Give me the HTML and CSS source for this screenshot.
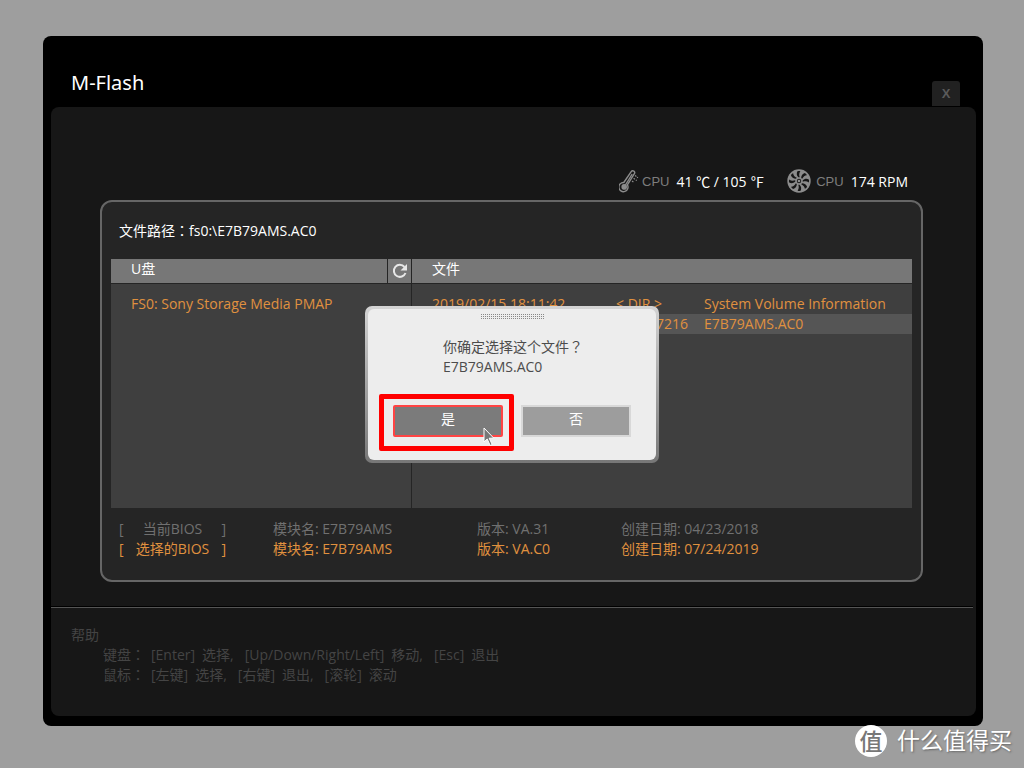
FILE: index.html
```html
<!DOCTYPE html>
<html lang="zh-CN">
<head>
<meta charset="utf-8">
<title>M-Flash</title>
<link rel="stylesheet" href="styles.css">
</head>
<body>
<main class="window">
  <header class="titlebar">
    <h1 class="title">M-Flash</h1>
    <button class="close" type="button" aria-label="关闭">X</button>
  </header>

  <div class="content">
    <section class="workspace">
      <div class="sensors">
        <div class="sensor">
          <svg class="sensor-icon thermometer" viewBox="0 0 20 24" aria-hidden="true">
            <g fill="none" stroke="#8c8c8c" stroke-width="1.4">
              <path d="M4.800 13.500 12.200 2.600a1.900 1.900 0 0 1 3.200 2.100L8.400 15.800a4.600 4.600 0 1 1-3.600-2.300z"/>
              <path d="M6.400 16 13.200 5.200"/>
              <path d="M16 6.500l1.400.9M14.600 9.300l1.400.9M13 12l1.400.9M18 8.200l1 .6M16.800 11l1 .6" stroke-width="1.200"/>
            </g>
            <circle cx="5.200" cy="17.900" r="2.800" fill="#8c8c8c"/>
          </svg>
          <span class="sensor-name">CPU</span>
          <span class="sensor-value">41 <span class="mark" lang="zh-TW">℃</span> / 105 <span class="mark" lang="zh-TW">℉</span></span>
        </div>
        <div class="sensor">
          <svg class="sensor-icon" viewBox="0 0 24 24" aria-hidden="true">
            <circle cx="12" cy="12" r="11.700" fill="#8c8c8c"/>
            <g fill="#171717">
              <path id="slot" d="M11.400 8.300C9.600 6.500 9.400 4.300 10.400 2.200c1-.4 2.200-.3 3 .1-1.300 1.700-1.500 3.500-.7 5.900z"/>
              <use href="#slot" transform="rotate(45 12 12)"/>
              <use href="#slot" transform="rotate(90 12 12)"/>
              <use href="#slot" transform="rotate(135 12 12)"/>
              <use href="#slot" transform="rotate(180 12 12)"/>
              <use href="#slot" transform="rotate(225 12 12)"/>
              <use href="#slot" transform="rotate(270 12 12)"/>
              <use href="#slot" transform="rotate(315 12 12)"/>
              <circle cx="12" cy="12" r="2.200"/>
            </g>
            <circle cx="12" cy="12" r="1.300" fill="#8c8c8c"/>
          </svg>
          <span class="sensor-name">CPU</span>
          <span class="sensor-value">174 RPM</span>
        </div>
      </div>

      <div class="card">
        <p class="path">文件路径<span class="mark" lang="zh-TW">：</span>fs0:\E7B79AMS.AC0</p>

        <div class="browser">
          <div class="pane drives">
            <div class="pane-head">
              <h2 class="pane-title">U盘</h2>
              <button class="refresh" type="button" aria-label="刷新">
                <svg viewBox="0 0 16 16" aria-hidden="true">
                  <path d="M12.500 4A6 6 0 1 0 13.500 10" fill="none" stroke="#e8e8e8" stroke-width="2"/>
                  <path d="M15 1v6.500H8.500z" fill="#e8e8e8"/>
                </svg>
              </button>
            </div>
            <ul class="drive-list">
              <li>FS0: Sony Storage Media PMAP</li>
            </ul>
          </div>
          <div class="pane files">
            <div class="pane-head">
              <h2 class="pane-title">文件</h2>
            </div>
            <table class="file-list" aria-label="文件">
              <tr>
                <td class="date">2019/02/15 18:11:42</td>
                <td class="size dir">&lt; DIR &gt;</td>
                <td>System Volume Information</td>
              </tr>
              <tr class="selected">
                <td class="date"></td>
                <td class="size">7216</td>
                <td>E7B79AMS.AC0</td>
              </tr>
            </table>
          </div>
        </div>

        <table class="versions" aria-label="BIOS">
          <tr>
            <td class="which"><div class="bracket"><span>[</span><span>当前BIOS</span><span>]</span></div></td>
            <td class="module">模块名: E7B79AMS</td>
            <td class="version">版本: VA.31</td>
            <td>创建日期: 04/23/2018</td>
          </tr>
          <tr class="chosen">
            <td class="which"><div class="bracket"><span>[</span><span>选择的BIOS</span><span>]</span></div></td>
            <td class="module">模块名: E7B79AMS</td>
            <td class="version">版本: VA.C0</td>
            <td>创建日期: 07/24/2019</td>
          </tr>
        </table>
      </div>
    </section>

    <footer class="help">
      <h2 class="help-title">帮助</h2>
      <div class="help-row">
        <span class="device">键盘<span class="mark" lang="zh-TW">：</span></span>
        <span class="hint"><span>[Enter]</span><span>选择,</span></span>
        <span class="hint"><span>[Up/Down/Right/Left]</span><span>移动,</span></span>
        <span class="hint"><span>[Esc]</span><span>退出</span></span>
      </div>
      <div class="help-row">
        <span class="device">鼠标<span class="mark" lang="zh-TW">：</span></span>
        <span class="hint"><span>[左键]</span><span>选择,</span></span>
        <span class="hint"><span>[右键]</span><span>退出,</span></span>
        <span class="hint"><span>[滚轮]</span><span>滚动</span></span>
      </div>
    </footer>
  </div>
</main>

<div class="overlay">
  <div class="dialog-frame" role="dialog" aria-modal="true" aria-labelledby="question">
    <div class="dialog">
      <div class="grip"></div>
      <p class="message"><span id="question">你确定选择这个文件<span class="mark" lang="zh-TW">？</span></span><br>E7B79AMS.AC0</p>
      <div class="actions">
        <div class="highlight">
          <button class="choice yes" type="button">是</button>
          <svg class="pointer" viewBox="0 0 12 20" aria-hidden="true">
            <path d="M1 1v14l3.200-3 3 6.500 2-1-3-6.300h4.600z" fill="#777" stroke="#fff" stroke-width="1"/>
          </svg>
        </div>
        <button class="choice" type="button">否</button>
      </div>
    </div>
  </div>
</div>

<div class="brand">
  <span class="brand-seal">值</span>
  <span class="brand-name">什么值得买</span>
</div>
</body>
</html>
```
FILE: styles.css
```css
* {
  box-sizing: border-box;
}

body {
  position: relative;
  display: flex;
  min-height: 100vh;
  margin: 0;
  padding: 36px 41px 42px 43px;
  background: #9e9e9e;
  color: #fff;
  font: 14px/20px "Open Sans", "Noto Sans CJK SC", sans-serif;
}

h1, h2, p, ul {
  margin: 0;
  padding: 0;
  font-size: inherit;
  font-weight: 400;
  list-style: none;
}

button {
  padding: 0;
  border: 0;
  color: inherit;
  font: inherit;
}

table {
  border-collapse: collapse;
}

td {
  padding: 0;
  white-space: nowrap;
}

.mark {
  font-family: "Noto Sans CJK TC", sans-serif;
  line-height: 1;
}

.window {
  display: flex;
  flex: 1;
  flex-direction: column;
  padding: 0 7px 10px 8px;
  border-radius: 8px;
  background: #000;
}

.titlebar {
  display: flex;
  align-items: flex-end;
  justify-content: space-between;
  height: 71px;
  padding: 0 16px 1px 20px;
}

.title {
  padding-bottom: 9px;
  font-family: "Noto Sans", sans-serif;
  font-size: 20px;
  line-height: 28px;
}

.close {
  width: 28px;
  height: 25px;
  border-radius: 3px 3px 0 0;
  background: #212121;
  color: #5a5a5a;
  font: bold 13px "Liberation Sans", sans-serif;
}

.content {
  display: flex;
  flex: 1;
  flex-direction: column;
  border-radius: 8px;
  background: #171717;
}

.workspace {
  display: flex;
  flex: 1;
  flex-direction: column;
  padding: 62px 53px 25px 49px;
}

.sensors {
  display: flex;
  justify-content: flex-end;
  gap: 23px;
  padding: 0 15px 5px 0;
}

.sensor {
  display: flex;
  align-items: center;
}

.sensor-icon {
  width: 24px;
  height: 24px;
  margin: 0 5px 2px 0;
}

.thermometer {
  width: 20px;
  margin-right: 3px;
}

.sensor-name {
  margin-right: 7px;
  color: #7d7d7d;
  font: 13px/26px "Liberation Sans", sans-serif;
}

.sensor-value {
  line-height: 26px;
}

.card {
  display: flex;
  flex: 1;
  flex-direction: column;
  padding: 19px 9px 21px;
  border: 2px solid #666;
  border-radius: 12px;
  background: #252525;
}

.path {
  padding: 0 8px 18px;
}

.browser {
  display: flex;
  flex: 1;
  background: #3f3f3f;
}

.drives {
  flex: 0 0 301px;
  border-right: 1px solid #252525;
}

.files {
  flex: 1;
}

.pane-head {
  display: flex;
  height: 25px;
  border-bottom: 1px solid #252525;
  background: #777;
}

.pane-title {
  flex: 1;
  padding-left: 20px;
}

.refresh {
  display: grid;
  width: 24px;
  place-items: center;
  border-left: 1px solid #252525;
  background: #777;
}

.refresh svg {
  width: 16px;
  height: 16px;
}

.drive-list,
.file-list {
  margin-top: 10px;
  color: #e0913f;
}

.drive-list {
  padding-left: 20px;
}

.file-list {
  width: 100%;
}

.selected {
  background: #555;
}

.date {
  width: 204px;
  padding-left: 20px;
}

.size {
  width: 88px;
  padding-right: 16px;
  text-align: right;
}

.dir {
  text-align: left;
}

.versions {
  width: 100%;
  margin-top: 11px;
  color: #707070;
}

.chosen {
  color: #e0913f;
}

.which {
  width: 162px;
  padding: 0 47px 0 8px;
}

.bracket {
  display: flex;
  justify-content: space-between;
}

.module {
  width: 204px;
}

.version {
  width: 144px;
}

.help {
  margin-right: 3px;
  padding: 17px 20px 31px;
  border-top: 1px solid #555;
  box-shadow: 0 -1px #000;
  color: #444;
}

.help-row {
  display: flex;
  gap: 11px;
  height: 20px;
  padding-left: 32px;
}

.device {
  margin-right: -5px;
}

.hint {
  display: flex;
  gap: 7px;
}

.overlay {
  position: absolute;
  inset: 0;
  display: grid;
  place-items: center;
}

.dialog-frame {
  width: 294px;
  padding: 3px;
  border-radius: 7px;
  background: linear-gradient(#d4d4d4, #777);
}

.dialog {
  padding: 5px 25px 23px;
  border-radius: 6px;
  background: #ededed;
}

.grip {
  width: 64px;
  height: 6px;
  margin: 0 auto;
  background: conic-gradient(#888 25%, transparent 0) 0 0 / 2px 2px;
}

.message {
  padding: 17px 0 28px 50px;
  color: #4c4c4c;
}

.actions {
  display: flex;
  justify-content: space-between;
}

.highlight {
  position: relative;
}

.highlight::before {
  position: absolute;
  inset: -11px -11px -14px -14px;
  border: 5px solid #f00;
  border-radius: 2px;
  content: "";
}

.choice {
  display: block;
  width: 110px;
  height: 32px;
  padding-bottom: 4px;
  border: 2px solid #d8d8d8;
  background: #9d9d9d;
}

.yes {
  position: relative;
  border-color: #f44;
  border-radius: 2px;
  background: #7b7b7b;
}

.pointer {
  position: absolute;
  right: 8px;
  bottom: -10px;
  width: 12px;
  height: 20px;
}

.brand {
  position: absolute;
  right: 12px;
  bottom: 11px;
  display: flex;
  align-items: center;
  gap: 10px;
  font-family: "Noto Sans CJK SC", sans-serif;
  text-shadow: 1px 1px 2px #666;
}

.brand-seal {
  width: 32px;
  height: 32px;
  border-radius: 50%;
  background: #fff;
  color: #777;
  font-size: 23px;
  font-weight: 500;
  line-height: 30px;
  text-align: center;
  text-shadow: none;
}

.brand-name {
  padding-bottom: 4px;
  font-size: 23px;
  line-height: 28px;
}
```
